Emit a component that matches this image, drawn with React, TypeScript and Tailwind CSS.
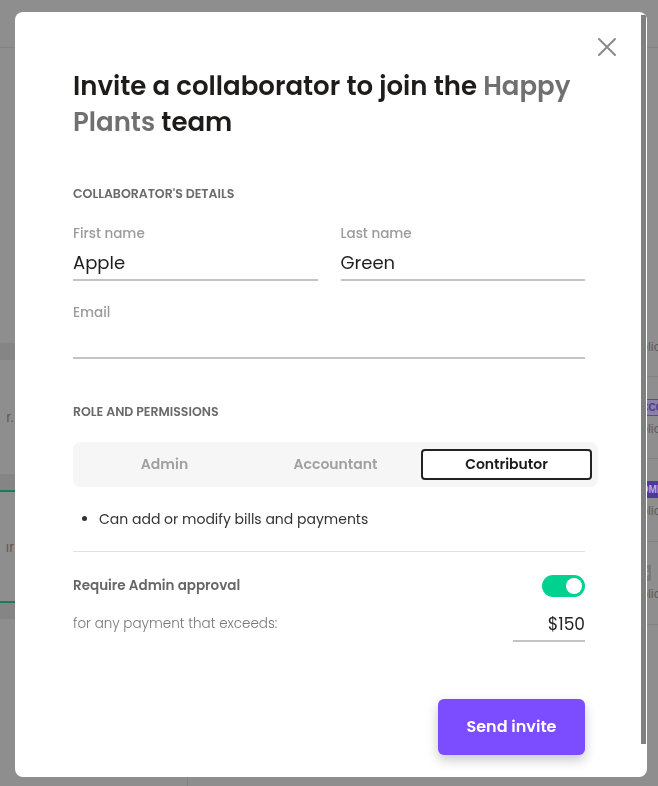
import React from "react";

const FONT = { fontFamily: '"Poppins", "Inter", "Noto Sans", sans-serif' };

function BgRow({ badge, h = "h-[82px]" }: { badge?: React.ReactNode; h?: string }) {
  return (
    <div className={"flex shrink-0 flex-col gap-[7px] border-b border-[#838383] pt-[22px] " + h}>
      <div className="flex h-[17px] items-center">{badge}</div>
      <span className="leading-[12px]">Policy</span>
    </div>
  );
}

function BgPage() {
  return (
    <div className="flex h-[786px] w-[658px] flex-col bg-[#8e8e8e] text-[13px] text-[#5e5e5e]" style={{ fontFamily: '"Liberation Sans", sans-serif' }}>
      <div className="h-[48px] shrink-0 border-b border-[#838383]" />
      <div className="flex flex-1">
        <div className="flex w-[188px] shrink-0 flex-col border-r border-[#838383]">
          <div className="h-[295px] shrink-0" />
          <div className="h-[17px] shrink-0 bg-[#858585]" />
          <div className="flex h-[114px] shrink-0 items-center justify-end pr-[173px] leading-none">
            <span className="text-[14px] text-[#5a5a5a]">r.</span>
          </div>
          <div className="h-[18px] shrink-0 border-b-2 border-[#1f7a55] bg-[#858585]" />
          <div className="flex h-[109px] shrink-0 items-center justify-end pr-[173px] leading-none">
            <span className="text-[14px] text-[#5a5a5a]">ır</span>
          </div>
          <div className="h-[18px] shrink-0 border-t-2 border-[#1f7a55] bg-[#858585]" />
        </div>
        <div className="flex flex-1 flex-col pl-[444px]">
          <div className="h-[247px] shrink-0" />
          <BgRow />
          <BgRow
            badge={<span className="bg-[#8c80a8] px-[2px] text-[10px] font-bold leading-[15px] text-[#4b3b8a] outline outline-1 outline-[#5b45b0]">ACCOUNTANT</span>}
          />
          <BgRow
            h="h-[83px]"
            badge={<span className="bg-[#4d3a99] px-[2px] text-[10px] font-bold leading-[17px] text-[#b8aee0]">ADMIN</span>}
          />
          <BgRow
            h="h-[83px]"
            badge={<span className="bg-[#7a7a7a] px-[2px] text-[10px] font-bold leading-[16px] text-[#9a9a9a]">CG</span>}
          />
        </div>
      </div>
    </div>
  );
}

function Underline({ className = "" }: { className?: string }) {
  return <div className={"h-[2px] bg-[#c4c4c4] " + className} />;
}

function XIcon() {
  return (
    <svg width="20" height="20" viewBox="0 0 20 20" fill="none" stroke="#8a8a8a" strokeWidth="2" strokeLinecap="round">
      <path d="M2 2 L18 18 M18 2 L2 18" />
    </svg>
  );
}

function Modal() {
  return (
    <div className="fixed left-[15px] top-[12px] h-[765px] w-[632px] overflow-hidden rounded-[8px] bg-white" style={FONT}>
      <div className="absolute right-[1px] top-[3px] h-[729px] w-[5px] bg-[#808080]" />
      <button className="absolute left-[582px] top-[25px] flex h-[20px] w-[20px] items-center justify-center">
        <XIcon />
      </button>
      <div className="flex flex-col pl-[58px] pr-[62px] pt-[56px]">
        <h1 className="text-[26px] font-semibold leading-[36px] text-[#1e1b1b]">
          Invite a collaborator to join the <span className="text-[#707070]">Happy Plants</span> team
        </h1>

        <div className="mt-[45px] text-[12.5px] font-semibold uppercase leading-[18px] text-[#6a6a6a]">Collaborator's details</div>

        <div className="mt-[22px] grid grid-cols-2 gap-[23px]">
          <div className="flex flex-col">
            <span className="text-[13.5px] font-medium leading-[18px] text-[#9b9b9b]">First name</span>
            <span className="mt-[8px] text-[18px] leading-[24px] text-[#1e1e1e]">Apple</span>
            <Underline className="mt-[4px]" />
          </div>
          <div className="flex flex-col">
            <span className="text-[13.5px] font-medium leading-[18px] text-[#9b9b9b]">Last name</span>
            <span className="mt-[8px] text-[18px] leading-[24px] text-[#1e1e1e]">Green</span>
            <Underline className="mt-[4px]" />
          </div>
        </div>

        <div className="mt-[23px] flex flex-col">
          <span className="text-[13.5px] font-medium leading-[18px] text-[#9b9b9b]">Email</span>
          <div className="h-[35px]" />
          <Underline />
        </div>

        <div className="mt-[44px] text-[12.5px] font-semibold uppercase leading-[18px] text-[#6a6a6a]">Role and permissions</div>

        <div className="mr-[-13px] mt-[21px] grid grid-cols-3 rounded-[8px] bg-[#f6f6f6] px-[6px] py-[7px]">
          <div className="flex h-[31px] items-center justify-center text-[14px] font-semibold text-[#a0a0a0]">Admin</div>
          <div className="flex h-[31px] items-center justify-center text-[14px] font-semibold text-[#a0a0a0]">Accountant</div>
          <div className="flex h-[31px] items-center justify-center rounded-[4px] border-2 border-[#222] bg-white text-[14px] font-semibold text-[#1a1a1a]">Contributor</div>
        </div>

        <ul className="mt-[22px] list-disc pl-[26px] text-[14px] leading-[20px] text-[#333]">
          <li>Can add or modify bills and payments</li>
        </ul>

        <div className="mt-[22px] h-px bg-[#e2e2e2]" />

        <div className="mt-[23px] flex items-center justify-between">
          <span className="text-[13.5px] font-semibold text-[#666]">Require Admin approval</span>
          <div className="flex h-[22px] w-[43px] items-center justify-end rounded-full bg-[#00d18f] px-[3px]">
            <div className="h-[16px] w-[16px] rounded-full bg-white" />
          </div>
        </div>

        <div className="mt-[15px] flex items-start justify-between">
          <span className="pt-[2px] text-[13.5px] font-light text-[#777]">for any payment that exceeds:</span>
          <div className="flex w-[72px] flex-col items-end">
            <span className="text-[17px] leading-[24px] text-[#222]">$150</span>
            <Underline className="mt-[4px] w-full" />
          </div>
        </div>

        <div className="mt-[57px] flex justify-end">
          <button className="h-[56px] w-[147px] rounded-[6px] bg-[#7c4dff] text-[16px] font-semibold text-white shadow-[0_5px_12px_rgba(0,0,0,0.22)]">
            Send invite
          </button>
        </div>
      </div>
    </div>
  );
}

export default function App() {
  return (
    <div className="relative h-[786px] w-[658px] overflow-hidden">
      <BgPage />
      <Modal />
    </div>
  );
}
